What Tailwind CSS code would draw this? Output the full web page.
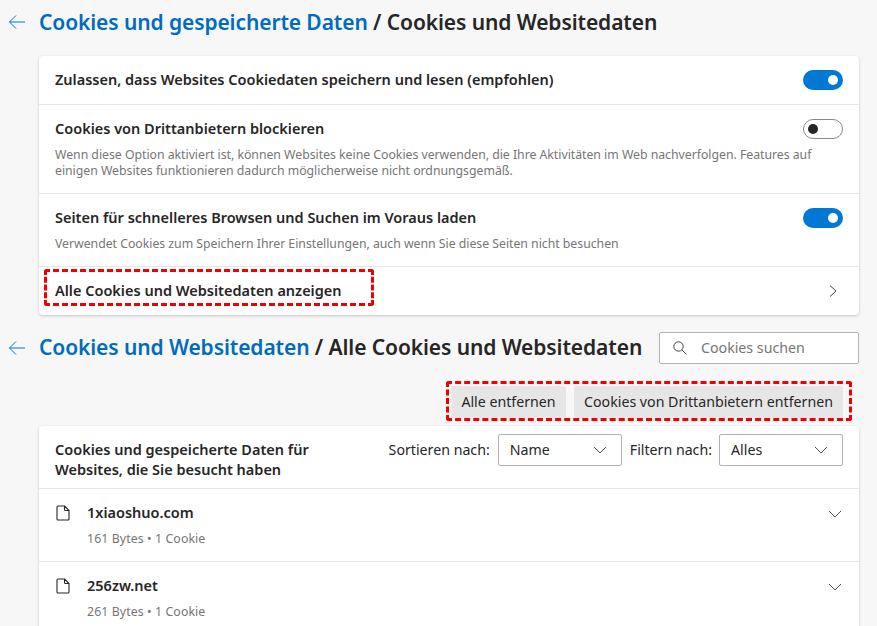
<!DOCTYPE html>
<html lang="de">
<head>
  <meta charset="UTF-8" />
  <title>Cookies und Websitedaten</title>
  <script src="https://cdn.jsdelivr.net/npm/@tailwindcss/browser@4"></script>
</head>
<body class="bg-[#f7f7f7] h-[626px] overflow-hidden font-['Noto_Sans','Open_Sans',sans-serif] text-[#262626]">
  <div class="pr-[18px]">
    <!-- first header -->
    <div class="flex items-center h-[44px] pl-[8px]">
      <svg class="w-[18px] h-[16px] mr-[13px]" viewBox="0 0 18 16" fill="none" stroke="#0078d4" stroke-width="1"><path d="M17 8H1.5M8 1.5 1.5 8 8 14.5"/></svg>
      <h1 class="mt-[2px] text-[21px] font-semibold tracking-[-0.1px] whitespace-nowrap"><span class="text-[#006cbe]">Cookies und gespeicherte Daten</span> / Cookies und Websitedaten</h1>
    </div>

    <!-- settings card -->
    <div class="ml-[39px] mt-[12px] bg-white rounded-[4px] shadow-[0_1px_3px_rgba(0,0,0,0.2)] h-[259px]">
      <div class="h-[49px] px-[16px] flex items-center justify-between border-b border-[#e6e6e6]">
        <span class="text-[14.5px] font-semibold">Zulassen, dass Websites Cookiedaten speichern und lesen (empfohlen)</span>
        <div class="w-[40px] h-[20px] rounded-full bg-[#0078d4] flex items-center justify-end pr-[5px]"><div class="w-[10px] h-[10px] rounded-full bg-white"></div></div>
      </div>
      <div class="h-[89px] px-[16px] pt-[14px] border-b border-[#e6e6e6]">
        <div class="flex items-center justify-between h-[20px]">
          <span class="text-[14.5px] font-semibold">Cookies von Drittanbietern blockieren</span>
          <div class="w-[40px] h-[20px] rounded-full border border-[#8a8a8a] flex items-center pl-[4px]"><div class="w-[10px] h-[10px] rounded-full bg-[#262626]"></div></div>
        </div>
        <p class="mt-[8px] text-[12.3px] leading-[16px] text-[#767676] tracking-[-0.03px] whitespace-nowrap">Wenn diese Option aktiviert ist, können Websites keine Cookies verwenden, die Ihre Aktivitäten im Web nachverfolgen. Features auf<br>einigen Websites funktionieren dadurch möglicherweise nicht ordnungsgemäß.</p>
      </div>
      <div class="h-[73px] px-[16px] pt-[14px] border-b border-[#e6e6e6]">
        <div class="flex items-center justify-between h-[20px]">
          <span class="text-[14.5px] font-semibold">Seiten für schnelleres Browsen und Suchen im Voraus laden</span>
          <div class="w-[40px] h-[20px] rounded-full bg-[#0078d4] flex items-center justify-end pr-[5px]"><div class="w-[10px] h-[10px] rounded-full bg-white"></div></div>
        </div>
        <p class="mt-[8px] text-[12.3px] leading-[16px] text-[#767676] tracking-[-0.03px]">Verwendet Cookies zum Speichern Ihrer Einstellungen, auch wenn Sie diese Seiten nicht besuchen</p>
      </div>
      <div class="relative h-[48px] px-[16px] flex items-center justify-between">
        <span class="text-[14.5px] font-semibold">Alle Cookies und Websitedaten anzeigen</span>
        <svg class="w-[16px] h-[16px] mr-[2px]" viewBox="0 0 16 16" fill="none" stroke="#444" stroke-width="1"><path d="M5 2.5 11 8l-6 5.5"/></svg>
        <div class="absolute left-[5px] top-[2px] w-[330px] h-[37px] border-[3px] border-dashed border-[#f00000] rounded-[3px]"></div>
      </div>
    </div>

    <!-- second header -->
    <div class="flex items-center justify-between mt-[17px] h-[32px] pl-[8px]">
      <div class="flex items-center">
        <svg class="w-[18px] h-[16px] mr-[13px]" viewBox="0 0 18 16" fill="none" stroke="#0078d4" stroke-width="1"><path d="M17 8H1.5M8 1.5 1.5 8 8 14.5"/></svg>
        <h1 class="text-[21px] font-semibold tracking-[-0.1px] whitespace-nowrap"><span class="text-[#006cbe]">Cookies und Websitedaten</span> / Alle Cookies und Websitedaten</h1>
      </div>
      <div class="w-[200px] h-[32px] bg-white border border-[#b3b3b3] rounded-[2px] flex items-center pl-[13px]">
        <svg class="w-[16px] h-[16px] mr-[12px]" viewBox="0 0 16 16" fill="none" stroke="#444" stroke-width="1"><circle cx="5.5" cy="6.5" r="4.7"/><path d="M9 10 13.5 14.5"/></svg>
        <span class="text-[14.2px] text-[#767676]">Cookies suchen</span>
      </div>
    </div>

    <!-- remove buttons -->
    <div class="relative flex justify-end gap-[8px] mt-[22px] pr-[16px] h-[32px]">
      <button class="w-[115px] h-[32px] bg-[#e6e6e6] rounded-[2px] text-[14.2px]">Alle entfernen</button>
      <button class="w-[269px] h-[32px] bg-[#e6e6e6] rounded-[2px] text-[14.2px]">Cookies von Drittanbietern entfernen</button>
      <div class="absolute right-[7px] top-[-5px] w-[406px] h-[40px] border-[3px] border-dashed border-[#f00000] rounded-[3px]"></div>
    </div>

    <!-- cookie list -->
    <div class="ml-[39px] mt-[8px] bg-white rounded-[4px] shadow-[0_1px_3px_rgba(0,0,0,0.2)]">
      <div class="h-[63px] px-[16px] flex justify-between border-b border-[#e6e6e6]">
        <span class="mt-[13px] text-[14.5px] leading-[20px] font-semibold whitespace-nowrap">Cookies und gespeicherte Daten für<br>Websites, die Sie besucht haben</span>
        <div class="flex items-center h-[32px] mt-[8px]">
          <span class="text-[14.2px] mr-[8px]">Sortieren nach:</span>
          <div class="w-[124px] h-[32px] border border-[#b3b3b3] rounded-[2px] flex items-center justify-between pl-[11px] pr-[14px] text-[14.2px]">Name
            <svg class="w-[14px] h-[14px]" viewBox="0 0 14 14" fill="none" stroke="#555" stroke-width="1"><path d="M1 4l6 6 6-6"/></svg>
          </div>
          <span class="text-[14.2px] ml-[8px] mr-[7px]">Filtern nach:</span>
          <div class="w-[124px] h-[32px] border border-[#b3b3b3] rounded-[2px] flex items-center justify-between pl-[11px] pr-[14px] text-[14.2px]">Alles
            <svg class="w-[14px] h-[14px]" viewBox="0 0 14 14" fill="none" stroke="#555" stroke-width="1"><path d="M1 4l6 6 6-6"/></svg>
          </div>
        </div>
      </div>
      <div class="h-[73px] flex pl-[16px] pr-[16px] pt-[13px] border-b border-[#e6e6e6]">
        <svg class="w-[16px] h-[16px] mt-[3px] mr-[16px]" viewBox="0 0 16 16" fill="none" stroke="#262626" stroke-width="1.1" stroke-linejoin="round"><path d="M3 1h6.5L14 5.5V14a1 1 0 0 1-1 1H3a1 1 0 0 1-1-1V2a1 1 0 0 1 1-1zM9.5 1v3.5a1 1 0 0 0 1 1H14"/></svg>
        <div class="flex-1">
          <div class="text-[14.5px] leading-[20px] font-semibold">1xiaoshuo.com</div>
          <div class="mt-[9px] text-[12.3px] leading-[16px] text-[#767676] tracking-[0.1px]">161 Bytes • 1 Cookie</div>
        </div>
        <svg class="w-[14px] h-[14px] mt-[5px] mr-[1px]" viewBox="0 0 14 14" fill="none" stroke="#555" stroke-width="1"><path d="M1 4l6 6 6-6"/></svg>
      </div>
      <div class="h-[73px] flex pl-[16px] pr-[16px] pt-[13px]">
        <svg class="w-[16px] h-[16px] mt-[3px] mr-[16px]" viewBox="0 0 16 16" fill="none" stroke="#262626" stroke-width="1.1" stroke-linejoin="round"><path d="M3 1h6.5L14 5.5V14a1 1 0 0 1-1 1H3a1 1 0 0 1-1-1V2a1 1 0 0 1 1-1zM9.5 1v3.5a1 1 0 0 0 1 1H14"/></svg>
        <div class="flex-1">
          <div class="text-[14.5px] leading-[20px] font-semibold">256zw.net</div>
          <div class="mt-[9px] text-[12.3px] leading-[16px] text-[#767676] tracking-[0.1px]">261 Bytes • 1 Cookie</div>
        </div>
        <svg class="w-[14px] h-[14px] mt-[5px] mr-[1px]" viewBox="0 0 14 14" fill="none" stroke="#555" stroke-width="1"><path d="M1 4l6 6 6-6"/></svg>
      </div>
    </div>
  </div>
</body>
</html>
